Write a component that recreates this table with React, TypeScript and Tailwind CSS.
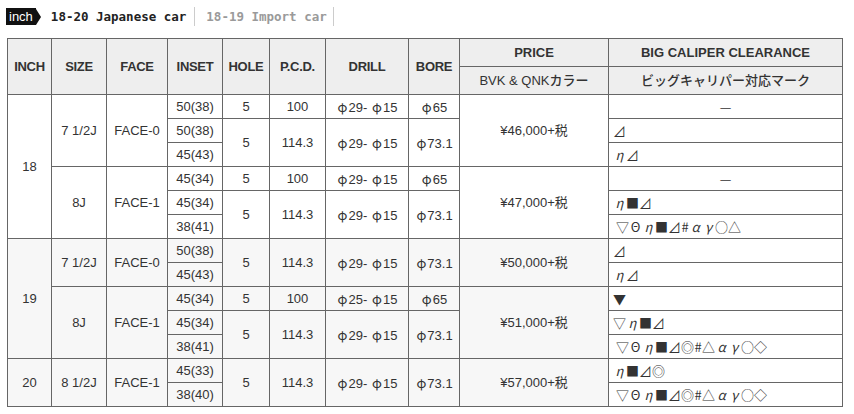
import React from "react";

type Cell = { t: string; rs?: number };

const td = "border border-[#666] text-center align-middle px-1 h-[24px] leading-none";
const cjk = { fontFamily: '"Noto Sans CJK JP", sans-serif' };

// φ は全角幅で表示
function Val({ t }: { t: string }) {
  if (!t.includes("φ")) return <>{t}</>;
  return (
    <>
      {t.split(/(φ)/).map((p, i) =>
        p === "φ" ? (
          <span key={i} className="inline-block w-[12px] text-center" style={cjk}>
            φ
          </span>
        ) : (
          <span key={i}>{p}</span>
        )
      )}
    </>
  );
}

// マークは1文字ずつ全角幅で並べる
function Mark({ m }: { m: string }) {
  return (
    <>
      {Array.from(m).map((ch, i) => (
        <span
          key={i}
          className={`inline-block text-center ${ch === "#" ? "w-[8px]" : "w-[13px]"} ${
            "ηαγ".includes(ch) ? "italic" : ""
          }`}
        >
          {ch}
        </span>
      ))}
    </>
  );
}

const groups: { shade: boolean; rows: { cells: Cell[]; mark: string; center?: boolean; indent?: boolean }[] }[] = [
  {
    shade: false,
    rows: [
      { cells: [{ t: "18", rs: 6 }, { t: "7 1/2J", rs: 3 }, { t: "FACE-0", rs: 3 }, { t: "50(38)" }, { t: "5" }, { t: "100" }, { t: "φ29- φ15" }, { t: "φ65" }, { t: "¥46,000+税", rs: 3 }], mark: "—", center: true },
      { cells: [{ t: "50(38)" }, { t: "5", rs: 2 }, { t: "114.3", rs: 2 }, { t: "φ29- φ15", rs: 2 }, { t: "φ73.1", rs: 2 }], mark: "⊿" },
      { cells: [{ t: "45(43)" }], mark: "η⊿" },
      { cells: [{ t: "8J", rs: 3 }, { t: "FACE-1", rs: 3 }, { t: "45(34)" }, { t: "5" }, { t: "100" }, { t: "φ29- φ15" }, { t: "φ65" }, { t: "¥47,000+税", rs: 3 }], mark: "—", center: true },
      { cells: [{ t: "45(34)" }, { t: "5", rs: 2 }, { t: "114.3", rs: 2 }, { t: "φ29- φ15", rs: 2 }, { t: "φ73.1", rs: 2 }], mark: "η■⊿" },
      { cells: [{ t: "38(41)" }], mark: "▽Θη■⊿#αγ○△", indent: true },
    ],
  },
  {
    shade: true,
    rows: [
      { cells: [{ t: "19", rs: 5 }, { t: "7 1/2J", rs: 2 }, { t: "FACE-0", rs: 2 }, { t: "50(38)" }, { t: "5", rs: 2 }, { t: "114.3", rs: 2 }, { t: "φ29- φ15", rs: 2 }, { t: "φ73.1", rs: 2 }, { t: "¥50,000+税", rs: 2 }], mark: "⊿" },
      { cells: [{ t: "45(43)" }], mark: "η⊿" },
      { cells: [{ t: "8J", rs: 3 }, { t: "FACE-1", rs: 3 }, { t: "45(34)" }, { t: "5" }, { t: "100" }, { t: "φ25- φ15" }, { t: "φ65" }, { t: "¥51,000+税", rs: 3 }], mark: "▼" },
      { cells: [{ t: "45(34)" }, { t: "5", rs: 2 }, { t: "114.3", rs: 2 }, { t: "φ29- φ15", rs: 2 }, { t: "φ73.1", rs: 2 }], mark: "▽η■⊿" },
      { cells: [{ t: "38(41)" }], mark: "▽Θη■⊿◎#△αγ○◇", indent: true },
    ],
  },
  {
    shade: true,
    rows: [
      { cells: [{ t: "20", rs: 2 }, { t: "8 1/2J", rs: 2 }, { t: "FACE-1", rs: 2 }, { t: "45(33)" }, { t: "5", rs: 2 }, { t: "114.3", rs: 2 }, { t: "φ29- φ15", rs: 2 }, { t: "φ73.1", rs: 2 }, { t: "¥57,000+税", rs: 2 }], mark: "η■⊿◎" },
      { cells: [{ t: "38(40)" }], mark: "▽Θη■⊿◎#△αγ○◇", indent: true },
    ],
  },
];

export default function App() {
  const mono = { fontFamily: '"DejaVu Sans Mono", monospace' };
  return (
    <div
      className="w-[854px] h-[414px] bg-white text-[#333] overflow-hidden"
      style={{ fontFamily: '"Liberation Sans", "Noto Sans CJK JP", sans-serif' }}
    >
      {/* タブ */}
      <div className="flex items-center h-[38px] pl-[6px] pb-[9px] pt-[4px]">
        <div className="flex items-center">
          <span className="bg-[#111] text-white text-[13px] leading-none h-[17px] flex items-center pl-[3px] pr-[3px]">inch</span>
          <span className="w-0 h-0 border-y-[8.5px] border-y-transparent border-l-[5px] border-l-[#111]" />
        </div>
        <span className="ml-[10px] text-[12.5px] font-bold text-[#222] pr-[8px] border-r border-[#ccc] leading-[19px]" style={mono}>
          18-20 Japanese car
        </span>
        <span className="text-[12.5px] font-bold text-[#9a9a9a] pl-[11px] pr-[6px] border-r border-[#ccc] leading-[19px]" style={mono}>
          18-19 Import car
        </span>
      </div>

      <table className="ml-[7px] border-collapse text-[13px] w-[835px] table-fixed">
        <colgroup>
          <col className="w-[44px]" />
          <col className="w-[55px]" />
          <col className="w-[61px]" />
          <col className="w-[55px]" />
          <col className="w-[47px]" />
          <col className="w-[56px]" />
          <col className="w-[83px]" />
          <col className="w-[51px]" />
          <col className="w-[149px]" />
          <col className="w-[234px]" />
        </colgroup>
        <thead className="bg-[#eeeeee] text-[#333]">
          <tr className="h-[28px]">
            {["INCH", "SIZE", "FACE", "INSET", "HOLE", "P.C.D.", "DRILL", "BORE"].map((h) => (
              <th key={h} rowSpan={2} className="border border-[#666] font-bold text-[13px] px-0 tracking-[-0.3px]">
                {h}
              </th>
            ))}
            <th className="border border-[#666] font-bold">PRICE</th>
            <th className="border border-[#666] font-bold">BIG CALIPER CLEARANCE</th>
          </tr>
          <tr className="h-[28px]">
            <th className="border border-[#666] font-medium">BVK &amp; QNKカラー</th>
            <th className="border border-[#666] font-medium">ビッグキャリパー対応マーク</th>
          </tr>
        </thead>
        {groups.map((g, gi) => (
          <tbody key={gi} className={g.shade ? "bg-[#f7f7f7]" : "bg-white"}>
            {g.rows.map((r, ri) => (
              <tr key={ri} className="h-[24px]">
                {r.cells.map((c, ci) => (
                  <td key={ci} rowSpan={c.rs} className={td}>
                    <Val t={c.t} />
                  </td>
                ))}
                <td
                  className={`border border-[#666] bg-white h-[24px] leading-none text-[13px] ${
                    r.center ? "text-center" : r.indent ? "text-left pl-[7px]" : "text-left pl-[4px]"
                  }`}
                  style={cjk}
                >
                  <Mark m={r.mark} />
                </td>
              </tr>
            ))}
          </tbody>
        ))}
      </table>
    </div>
  );
}
